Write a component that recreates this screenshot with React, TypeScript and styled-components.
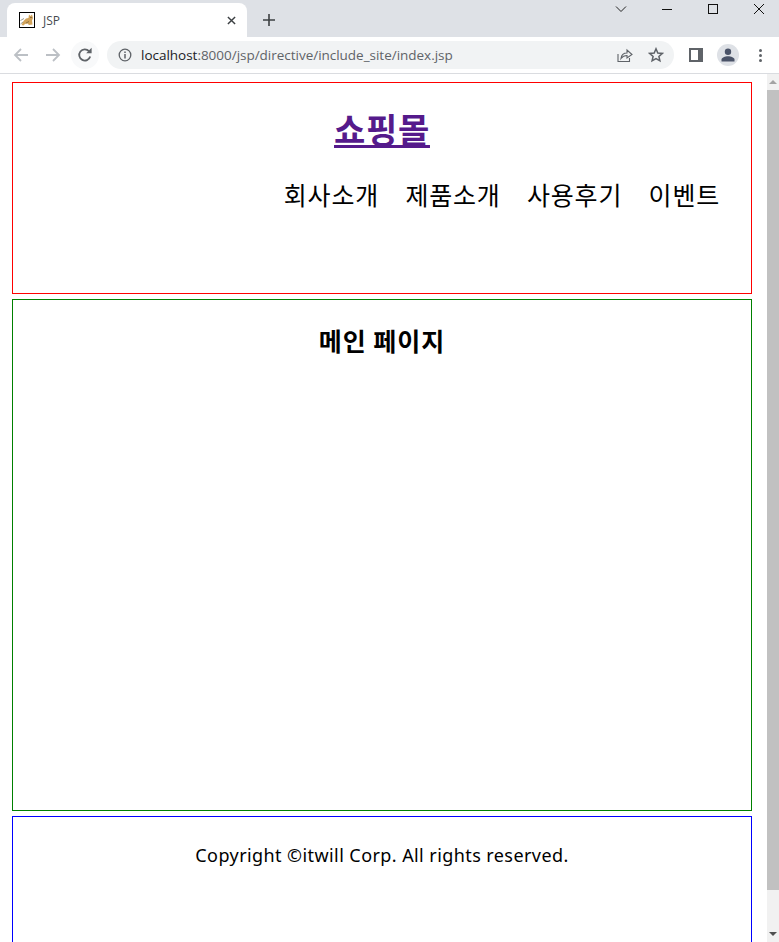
import React, { FC } from "react";
import styled, { createGlobalStyle } from "styled-components";

const GlobalStyle = createGlobalStyle`
  html, body { margin: 0; padding: 0; height: 100%; overflow: hidden; background: #fff; }
  body { font-family: "Noto Sans CJK KR", "Noto Sans", sans-serif; }
`;

const navItems = ["회사소개", "제품소개", "사용후기", "이벤트"];

const App: FC = () => (
  <Window>
    <GlobalStyle />
    <TabStrip>
      <Tab>
        <Favicon viewBox="0 0 16 16">
          <rect x="0.5" y="0.5" width="15" height="15" fill="#fff" stroke="#000" />
          <path d="M4.5 9 L7 6.5 L9.5 6 L10 2.5 L11.5 4 L13 2.5 L14 6 L13 8.5 L13.5 12.5 L10 13 L8.5 11.5 L6 12 L4.5 13.5 L2.5 13 Z" fill="#d2a35a" />
          <path d="M1.5 8.5 L5 6.5 M1.5 12 L4 10" stroke="#9a9a90" strokeWidth="1" fill="none" />
          <path d="M7 11 L10 9.5 M11 5.5 L13 5.5" stroke="#7a6440" strokeWidth="0.8" fill="none" />
        </Favicon>
        <TabTitle>JSP</TabTitle>
        <TabClose viewBox="0 0 10 10">
          <path d="M1 1 L9 9 M9 1 L1 9" stroke="#3c4043" strokeWidth="1.6" />
        </TabClose>
      </Tab>
      <NewTab viewBox="0 0 12 12">
        <path d="M6 0 V12 M0 6 H12" stroke="#3c4043" strokeWidth="1.6" />
      </NewTab>
      <WindowControls>
        <ControlIcon viewBox="0 0 12 12">
          <path d="M1 3.5 L6 8.5 L11 3.5" stroke="#222" fill="none" />
        </ControlIcon>
        <ControlIcon viewBox="0 0 12 12">
          <path d="M1 6.5 H11" stroke="#111" />
        </ControlIcon>
        <ControlIcon viewBox="0 0 12 12">
          <rect x="1.5" y="1.5" width="9" height="9" stroke="#111" fill="none" />
        </ControlIcon>
        <ControlIcon viewBox="0 0 12 12">
          <path d="M1 1 L11 11 M11 1 L1 11" stroke="#111" />
        </ControlIcon>
      </WindowControls>
    </TabStrip>
    <Toolbar>
      <ToolIcon viewBox="0 0 16 16">
        <path d="M15 8 H2 M8 2 L2 8 L8 14" stroke="#bcc0c5" strokeWidth="1.8" fill="none" />
      </ToolIcon>
      <ToolIcon viewBox="0 0 16 16">
        <path d="M1 8 H14 M8 2 L14 8 L8 14" stroke="#bcc0c5" strokeWidth="1.8" fill="none" />
      </ToolIcon>
      <ReloadButton>
        <ToolIcon viewBox="0 0 16 16">
          <path d="M13.2 9.5 A5.6 5.6 0 1 1 12 4.2" stroke="#5f6368" strokeWidth="1.8" fill="none" />
          <path d="M9.2 6.2 H14.6 V0.8 Z" fill="#5f6368" />
        </ToolIcon>
      </ReloadButton>
      <AddressBar>
        <InfoIcon viewBox="0 0 14 14">
          <circle cx="7" cy="7" r="5.8" stroke="#5f6368" strokeWidth="1.3" fill="none" />
          <path d="M7 6 V10.4 M7 3.6 V5" stroke="#5f6368" strokeWidth="1.5" />
        </InfoIcon>
        <Url>
          <UrlHost>localhost</UrlHost>:8000/jsp/directive/include_site/index.jsp
        </Url>
        <ShareIcon viewBox="0 0 16 16">
          <path d="M1 7 V14.5 H12.5 V11" stroke="#5f6368" strokeWidth="1.1" fill="none" />
          <path d="M4 11.5 C4.5 7.5 7 6 10 6 V3 L15 7.5 L10 11 V8.5 C7.5 8.5 5.5 9.5 4 11.5 Z" stroke="#5f6368" strokeWidth="1.1" fill="none" />
        </ShareIcon>
        <StarIcon viewBox="0 0 16 16">
          <path d="M8 1.8 L9.8 6 L14.3 6.4 L10.9 9.4 L11.9 13.8 L8 11.5 L4.1 13.8 L5.1 9.4 L1.7 6.4 L6.2 6 Z" stroke="#5f6368" strokeWidth="1.5" fill="none" />
        </StarIcon>
      </AddressBar>
      <ToolbarRight>
        <PanelIcon viewBox="0 0 14 14">
          <path fillRule="evenodd" d="M0 0 H14 V14 H0 Z M2 2 V12 H9 V2 Z" fill="#5f6368" />
        </PanelIcon>
        <Avatar>
          <svg width="14" height="14" viewBox="0 0 14 14">
            <circle cx="7" cy="3.8" r="3.2" fill="#4a5368" />
            <path d="M0.5 13.5 V11.5 C0.5 9.5 4 8.2 7 8.2 C10 8.2 13.5 9.5 13.5 11.5 V13.5 Z" fill="#4a5368" />
          </svg>
        </Avatar>
        <MenuDots>
          <Dot />
          <Dot />
          <Dot />
        </MenuDots>
      </ToolbarRight>
    </Toolbar>
    <Viewport>
      <Page>
        <HeaderBox>
          <Logo>
            <a href="#home">쇼핑몰</a>
          </Logo>
          <Nav>
            {navItems.map((item) => (
              <NavItem key={item}>{item}</NavItem>
            ))}
          </Nav>
        </HeaderBox>
        <MainBox>
          <MainTitle>메인 페이지</MainTitle>
        </MainBox>
        <FooterBox>
          <Copyright>Copyright ©itwill Corp. All rights reserved.</Copyright>
        </FooterBox>
      </Page>
      <Scrollbar>
        <ScrollArrow $up />
        <ScrollTrack>
          <ScrollThumb />
        </ScrollTrack>
        <ScrollArrow />
      </Scrollbar>
    </Viewport>
  </Window>
);

export default App;

const Window = styled.div`
  width: 779px;
  height: 942px;
  display: flex;
  flex-direction: column;
  overflow: hidden;
`;

const TabStrip = styled.div`
  height: 37px;
  flex: none;
  background: #dee1e6;
  display: flex;
  align-items: flex-end;
  padding-left: 7px;
  position: relative;
`;

const Tab = styled.div`
  width: 240px;
  height: 34px;
  box-sizing: border-box;
  background: #fff;
  border-radius: 8px 8px 0 0;
  display: flex;
  align-items: center;
  padding: 0 11px 0 12px;
`;

const Favicon = styled.svg`
  width: 16px;
  height: 16px;
  flex: none;
`;

const TabTitle = styled.span`
  flex: 1;
  margin-left: 8px;
  font-family: "Open Sans", sans-serif;
  font-size: 12px;
  color: #45494e;
`;

const TabClose = styled.svg`
  width: 9px;
  height: 9px;
  flex: none;
`;

const NewTab = styled.svg`
  width: 12px;
  height: 12px;
  margin: 0 0 11px 16px;
`;

const WindowControls = styled.div`
  position: absolute;
  top: 3px;
  right: 14px;
  display: flex;
  gap: 34px;
`;

const ControlIcon = styled.svg`
  width: 12px;
  height: 12px;
`;

const Toolbar = styled.div`
  height: 37px;
  flex: none;
  box-sizing: border-box;
  background: #fff;
  border-bottom: 1px solid #dadce0;
  display: flex;
  align-items: center;
  padding: 0 0 0 13px;
`;

const ToolIcon = styled.svg`
  width: 16px;
  height: 16px;
  flex: none;
  margin-right: 16px;
`;

const ReloadButton = styled.div`
  width: 28px;
  height: 28px;
  margin: 0 8px 0 -6px;
  border-radius: 50%;
  background: #f8f9fa;
  display: flex;
  align-items: center;
  justify-content: center;
  flex: none;

  ${ToolIcon} {
    margin: 0;
  }
`;

const AddressBar = styled.div`
  width: 567px;
  height: 28px;
  box-sizing: border-box;
  background: #f1f3f4;
  border-radius: 14px;
  display: flex;
  align-items: center;
  padding: 0 10px 0 11px;
  flex: none;
`;

const InfoIcon = styled.svg`
  width: 14px;
  height: 14px;
  flex: none;
`;

const Url = styled.span`
  flex: 1;
  margin-left: 9px;
  font-family: "Open Sans", sans-serif;
  font-size: 13.5px;
  letter-spacing: -0.02px;
  color: #5f6368;
  white-space: nowrap;
`;

const UrlHost = styled.span`
  color: #202124;
`;

const ShareIcon = styled.svg`
  width: 16px;
  height: 16px;
  flex: none;
  margin-right: 15px;
`;

const StarIcon = styled.svg`
  width: 16px;
  height: 16px;
  flex: none;
`;

const ToolbarRight = styled.div`
  display: flex;
  align-items: center;
  margin-left: 15px;
`;

const PanelIcon = styled.svg`
  width: 14px;
  height: 14px;
  flex: none;
`;

const Avatar = styled.div`
  width: 22px;
  height: 22px;
  margin-left: 14px;
  border-radius: 50%;
  background: #dee1e6;
  display: flex;
  align-items: center;
  justify-content: center;
`;

const MenuDots = styled.div`
  margin-left: 20px;
  display: flex;
  flex-direction: column;
  gap: 2px;
`;

const Dot = styled.span`
  width: 3px;
  height: 3px;
  border-radius: 50%;
  background: #5f6368;
`;

const Viewport = styled.div`
  flex: 1;
  min-height: 0;
  display: flex;
`;

const Page = styled.main`
  width: 767px;
  flex: none;
  box-sizing: border-box;
  padding: 8px 15px 0 12px;
  display: flex;
  flex-direction: column;
  gap: 5px;
  overflow: hidden;
  color: #000;
`;

const Box = styled.section`
  flex: none;
  box-sizing: border-box;
  width: 740px;
  text-align: center;
`;

const HeaderBox = styled(Box)`
  height: 212px;
  border: 1px solid red;
`;

const MainBox = styled(Box)`
  height: 512px;
  border: 1px solid green;
`;

const FooterBox = styled(Box)`
  height: 212px;
  border: 1px solid blue;
`;

const Logo = styled.h1`
  margin: 19px 0 0;
  font-size: 34px;
  line-height: 54px;
  font-weight: 700;
  letter-spacing: 0.7px;

  a {
    color: #551a8b;
    text-decoration: underline;
  }
`;

const Nav = styled.ul`
  list-style: none;
  margin: 20px 0 0;
  padding: 0 31px 0 0;
  display: flex;
  justify-content: flex-end;
  gap: 26.4px;
`;

const NavItem = styled.li`
  font-size: 25px;
  line-height: 36px;
  letter-spacing: 0.8px;
`;

const MainTitle = styled.h2`
  margin: 22px 0 0;
  font-size: 25px;
  line-height: 36px;
  font-weight: 700;
  letter-spacing: 1px;
`;

const Copyright = styled.p`
  margin: 24px 0 0;
  font-family: "Noto Sans", sans-serif;
  font-size: 18px;
  line-height: 28px;
  letter-spacing: 0.42px;
`;

const Scrollbar = styled.div`
  width: 12px;
  flex: none;
  background: #f1f1f1;
  display: flex;
  flex-direction: column;
`;

const ScrollArrow = styled.div<{ $up?: boolean }>`
  height: 16px;
  flex: none;
  display: flex;
  align-items: center;
  justify-content: center;

  &::before {
    content: "";
    border-left: 4px solid transparent;
    border-right: 4px solid transparent;
    ${(p) => (p.$up ? "border-bottom: 4px solid #a3a3a3;" : "border-top: 4px solid #505050;")}
  }
`;

const ScrollTrack = styled.div`
  flex: 1;
  min-height: 0;
`;

const ScrollThumb = styled.div`
  height: 800px;
  background: #c1c1c1;
`;
